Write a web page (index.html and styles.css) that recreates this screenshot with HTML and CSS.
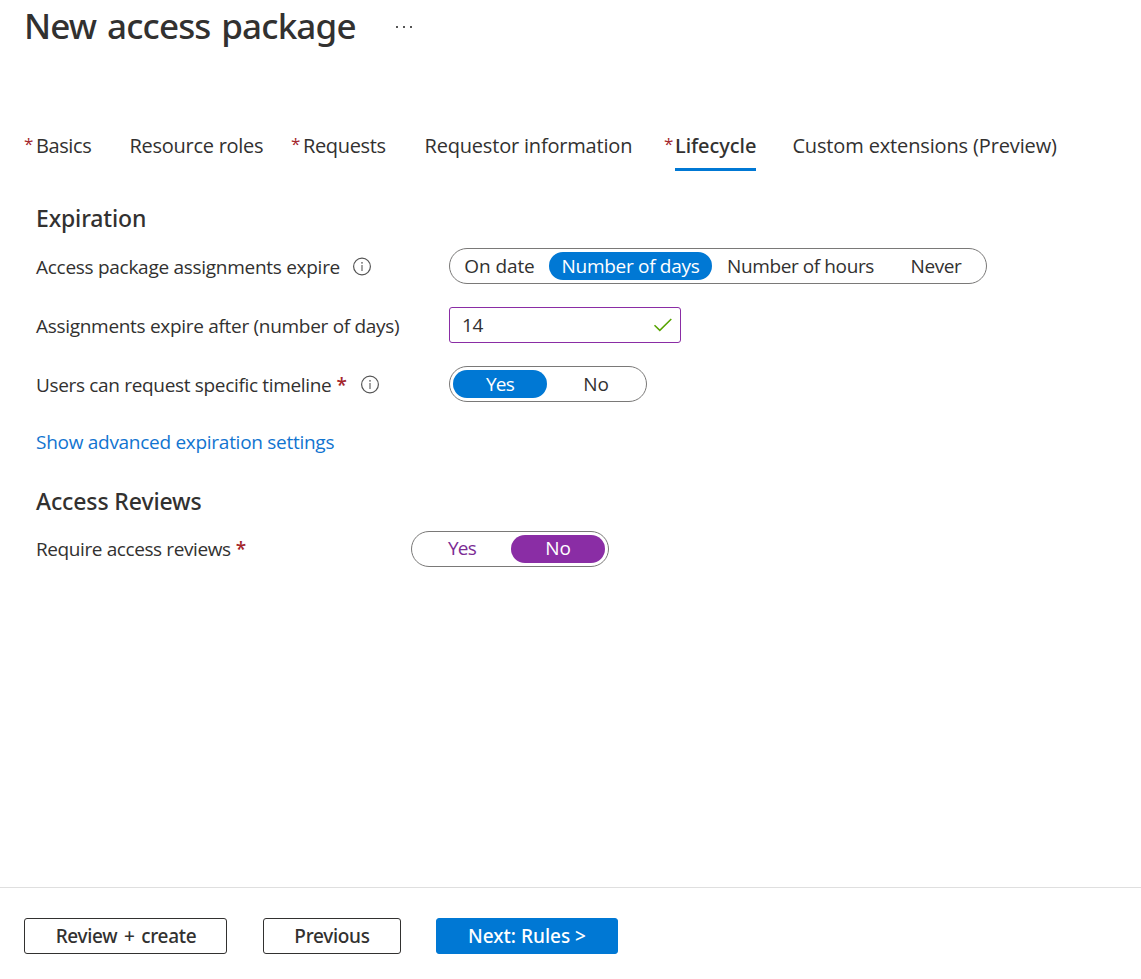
FILE: index.html
```
<!DOCTYPE html>
<html lang="en">
<head>
<meta charset="utf-8">
<title>New access package</title>
<link rel="stylesheet" href="styles.css">
</head>
<body>
<div class="page">
  <header class="header">
    <h1 class="title">New access package</h1>
    <svg class="more" width="18" height="4" viewBox="0 0 18 4"><path d="M1 1h2v2H1zM8 1h2v2H8zM15 1h2v2h-2z" fill="#555"/></svg>
  </header>

  <nav class="tabs">
    <a class="tab tab-basics"><span class="star">*</span><span>Basics</span></a>
    <a class="tab tab-roles"><span>Resource roles</span></a>
    <a class="tab tab-requests"><span class="star">*</span><span>Requests</span></a>
    <a class="tab tab-info"><span>Requestor information</span></a>
    <a class="tab tab-lifecycle"><span class="star">*</span><span class="current">Lifecycle</span></a>
    <a class="tab tab-custom"><span>Custom extensions (Preview)</span></a>
  </nav>

  <main class="content">
    <h2 class="heading">Expiration</h2>
    <div class="row">
      <div class="label"><span class="text-expire">Access package assignments expire</span>
        <svg class="info" width="20" height="20" viewBox="0 0 20 20"><circle cx="10" cy="9.5" r="8.4" fill="none" stroke="#555" stroke-width="1.2"/><path d="M10 8v6" stroke="#666" stroke-width="1.2"/><circle cx="10" cy="5.8" r=".9" fill="#666"/></svg>
      </div>
      <div class="pill pill-wide">
        <span class="seg seg-date">On date</span>
        <span class="seg seg-days selected">Number of days</span>
        <span class="seg seg-hours">Number of hours</span>
        <span class="seg seg-never">Never</span>
      </div>
    </div>
    <div class="row">
      <div class="label"><span class="text-after">Assignments expire after (number of days)</span></div>
      <div class="field"><span>14</span>
        <svg class="check" width="20" height="16" viewBox="0 0 20 16"><path d="M1.5 8.2L6.8 13.4L18.3 2" fill="none" stroke="#57a300" stroke-width="1.5"/></svg>
      </div>
    </div>
    <div class="row">
      <div class="label"><span class="text-timeline">Users can request specific timeline</span><span class="required">*</span>
        <svg class="info" width="20" height="20" viewBox="0 0 20 20"><circle cx="10" cy="9.5" r="8.4" fill="none" stroke="#555" stroke-width="1.2"/><path d="M10 8v6" stroke="#666" stroke-width="1.2"/><circle cx="10" cy="5.8" r=".9" fill="#666"/></svg>
      </div>
      <div class="pill">
        <span class="seg seg-yes selected">Yes</span>
        <span class="seg">No</span>
      </div>
    </div>
    <a class="link">Show advanced expiration settings</a>

    <h2 class="heading heading-reviews">Access Reviews</h2>
    <div class="row row-reviews">
      <div class="label"><span class="text-require">Require access reviews</span><span class="required">*</span></div>
      <div class="pill purple">
        <span class="seg seg-yes">Yes</span>
        <span class="seg selected">No</span>
      </div>
    </div>
  </main>

  <footer class="footer">
    <button class="btn btn-review">Review + create</button>
    <button class="btn btn-previous">Previous</button>
    <button class="btn btn-next">Next: Rules &gt;</button>
  </footer>
</div>
</body>
</html>
```
FILE: styles.css
```
* { box-sizing: border-box; }
body {
  margin: 0;
  background: #fff;
  color: #323130;
  font: 400 19px/24px "Open Sans", "Noto Sans", sans-serif;
}
.page { height: 979px; display: flex; flex-direction: column; overflow: hidden; }

.header { display: flex; align-items: center; height: 50px; padding-left: 24px; }
.title {
  margin: 0;
  width: 371px;
  padding-top: 2px;
  font: 500 35px/50px "Noto Sans", sans-serif;
  letter-spacing: -.84px;
  word-spacing: 2.5px;
  white-space: nowrap;
}
.more { margin-top: 4px; }

.tabs {
  display: grid;
  grid-template-columns: 105.5px 161.5px 133.5px 239.5px 128.4px 300px;
  padding-left: 24px;
  margin-top: 80px;
  height: 41px;
  font-size: 20px;
  line-height: 32px;
}
.tab { display: flex; white-space: nowrap; }
.star { width: 12px; color: #a4262c; font-size: 17px; letter-spacing: 0; line-height: 28px; }
.tab-basics { letter-spacing: -.4px; }
.tab-roles { letter-spacing: -.27px; }
.tab-requests { letter-spacing: -.35px; }
.tab-info { letter-spacing: -.19px; }
.tab-custom { letter-spacing: -.14px; }
.tab-lifecycle .star { width: 11px; }
.current {
  width: 81px;
  border-bottom: 3px solid #0078d4;
  font-family: "Noto Sans", sans-serif;
  font-weight: 500;
  letter-spacing: -.05px;
}

.content { flex: 1; padding-left: 36px; }
.heading { margin: 32px 0 0; font: 500 23px/30px "Noto Sans", sans-serif; letter-spacing: -.15px; }
.heading + .row { margin-top: 15px; }
.row { display: flex; align-items: center; height: 36px; margin-bottom: 23px; }
.label { display: flex; align-items: center; width: 413px; padding-top: 2px; white-space: nowrap; }
.text-expire { letter-spacing: -.28px; }
.text-after { letter-spacing: -.3px; }
.text-timeline { letter-spacing: -.33px; }
.text-require { letter-spacing: -.4px; }
.required { width: 9px; margin-left: 5px; color: #a4262c; font-weight: 600; }
.info { margin-left: 12px; }
.required + .info { margin-left: 15px; }

.pill {
  display: flex;
  gap: 2px;
  width: 198px;
  height: 36px;
  padding: 3px;
  border: 1px solid #7a7978;
  border-radius: 18px;
}
.pill-wide { width: 538px; gap: 0; }
.seg { width: 94px; height: 28px; border-radius: 14px; line-height: 28px; text-align: center; white-space: nowrap; }
.seg-date { width: 96px; padding-right: 3px; letter-spacing: -.1px; }
.seg-days { width: 163px; letter-spacing: -.3px; }
.seg-hours { width: 177px; letter-spacing: -.4px; }
.seg-never { width: 94px; letter-spacing: -.4px; }
.seg-yes { letter-spacing: -.8px; }
.selected { background: #0078d4; color: #fff; }
.purple .seg { color: #7b2c94; line-height: 27px; }
.purple .selected { background: #8a2da5; color: #fff; }

.field {
  display: flex;
  align-items: center;
  justify-content: space-between;
  width: 232px;
  height: 36px;
  padding: 0 7px 0 12px;
  border: 1px solid #8a2da5;
  border-radius: 3px;
  letter-spacing: -.4px;
}

.link { display: block; margin-top: 28px; color: #1174d0; letter-spacing: -.28px; }
.heading-reviews { margin-top: 32px; letter-spacing: -.12px; }
.row-reviews .label { width: 375px; padding-top: 0; }

.footer { display: flex; height: 92px; padding: 30px 0 0 24px; border-top: 1px solid #dfdfdf; }
.btn {
  height: 36px;
  padding: 0;
  border: 1px solid #323130;
  border-radius: 3px;
  background: #fff;
  color: #323130;
  font: 500 19px/34px "Noto Sans", sans-serif;
}
.btn-review { width: 203px; padding-left: 1px; letter-spacing: -.3px; word-spacing: 2px; }
.btn-previous { width: 138px; margin-left: 36px; letter-spacing: -.3px; }
.btn-next { width: 182px; margin-left: 35px; border-color: #0078d4; background: #0078d4; color: #fff; }
```
